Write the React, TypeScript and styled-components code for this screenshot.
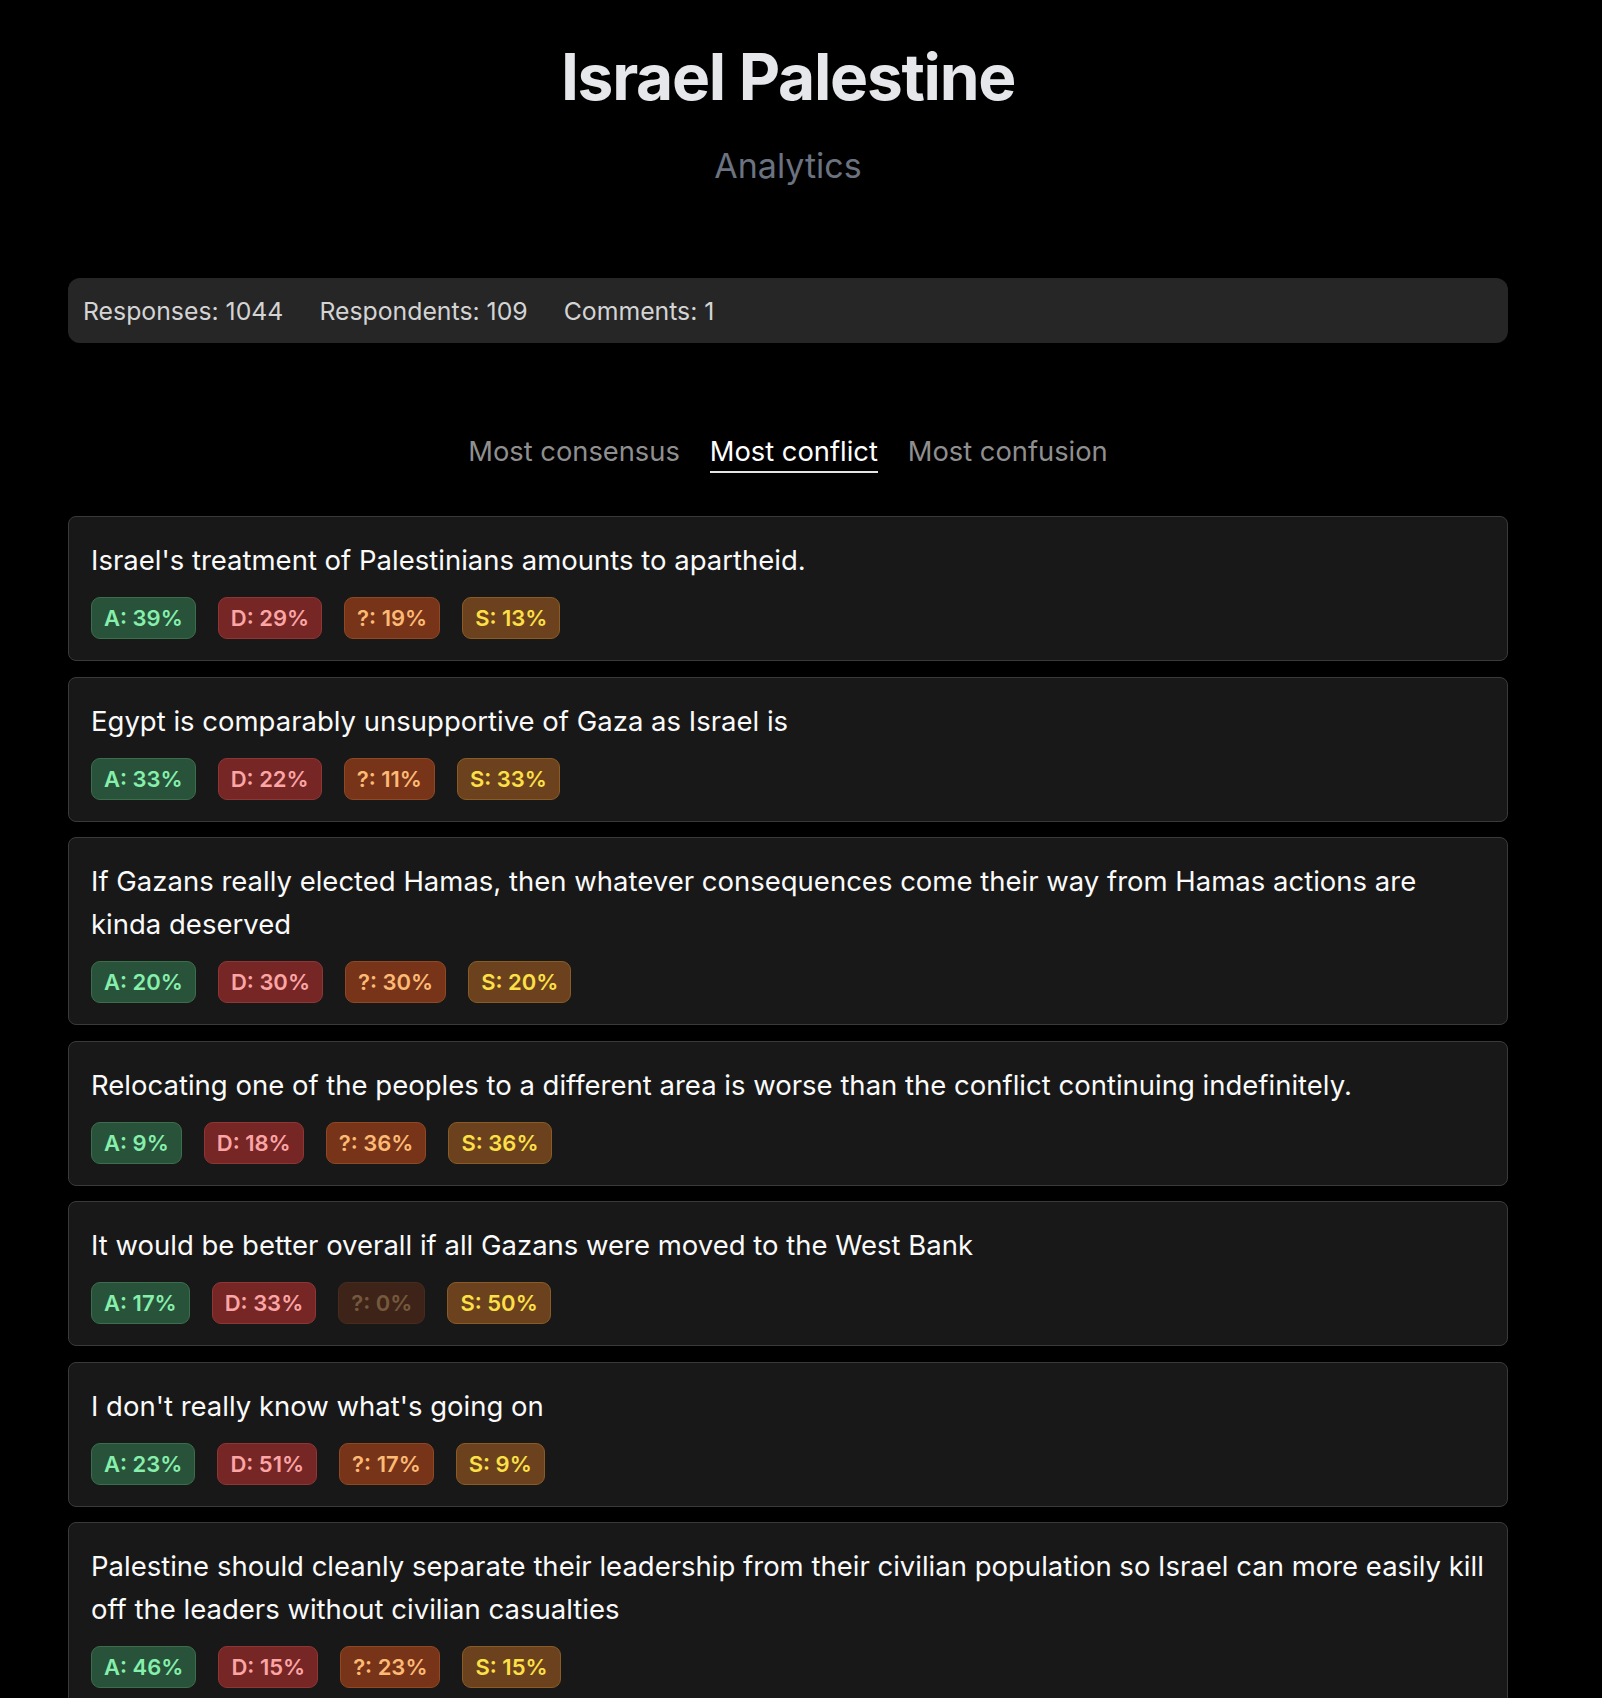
import React from "react";
import styled, { createGlobalStyle } from "styled-components";

type Kind = "agree" | "disagree" | "unsure" | "skip";

interface Statement {
  text: string;
  agree: number;
  disagree: number;
  unsure: number;
  skip: number;
}

const STATEMENTS: Statement[] = [
  { text: "Israel's treatment of Palestinians amounts to apartheid.", agree: 39, disagree: 29, unsure: 19, skip: 13 },
  { text: "Egypt is comparably unsupportive of Gaza as Israel is", agree: 33, disagree: 22, unsure: 11, skip: 33 },
  {
    text: "If Gazans really elected Hamas, then whatever consequences come their way from Hamas actions are kinda deserved",
    agree: 20,
    disagree: 30,
    unsure: 30,
    skip: 20,
  },
  {
    text: "Relocating one of the peoples to a different area is worse than the conflict continuing indefinitely.",
    agree: 9,
    disagree: 18,
    unsure: 36,
    skip: 36,
  },
  { text: "It would be better overall if all Gazans were moved to the West Bank", agree: 17, disagree: 33, unsure: 0, skip: 50 },
  { text: "I don't really know what's going on", agree: 23, disagree: 51, unsure: 17, skip: 9 },
  {
    text: "Palestine should cleanly separate their leadership from their civilian population so Israel can more easily kill off the leaders without civilian casualties",
    agree: 46,
    disagree: 15,
    unsure: 23,
    skip: 15,
  },
];

const BADGE_COLORS: Record<Kind, { bg: string; border: string; fg: string; label: string }> = {
  agree: { bg: "#28523a", border: "#3c6e4b", fg: "#86efac", label: "A" },
  disagree: { bg: "#762625", border: "#8e3634", fg: "#fca5a5", label: "D" },
  unsure: { bg: "#773419", border: "#8f4824", fg: "#fdba74", label: "?" },
  skip: { bg: "#6b421d", border: "#8a5c25", fg: "#fde047", label: "S" },
};

const GlobalStyle = createGlobalStyle`
  html, body {
    margin: 0;
    background: #000;
  }
  body {
    font-family: Inter, "Noto Sans", "Liberation Sans", sans-serif;
    color: #fff;
  }
`;

const Page = styled.div`
  padding: 38px 94px 40px 68px;
`;

const Header = styled.header`
  display: flex;
  flex-direction: column;
  align-items: center;
`;

const Title = styled.h1`
  margin: 0;
  font-size: 64px;
  line-height: 77px;
  font-weight: 700;
  letter-spacing: -0.02em;
  color: #e5e7eb;
`;

const Subtitle = styled.div`
  margin-top: 30px;
  font-size: 34px;
  line-height: 41px;
  color: #6b7280;
`;

const StatsBar = styled.div`
  margin-top: 92px;
  height: 65px;
  display: flex;
  align-items: center;
  gap: 36px;
  padding: 0 15px;
  background: #262626;
  border-radius: 12px;
  font-size: 24.8px;
  color: #d4d4d4;
`;

const Tabs = styled.nav`
  margin-top: 89px;
  display: flex;
  justify-content: center;
  gap: 30px;
`;

const Tab = styled.div<{ $active?: boolean }>`
  font-size: 27.3px;
  line-height: 39px;
  color: ${(p) => (p.$active ? "#ffffff" : "#8f8f8f")};
  border-bottom: 2px solid ${(p) => (p.$active ? "#e5e5e5" : "transparent")};
`;

const List = styled.div`
  margin-top: 43px;
  display: flex;
  flex-direction: column;
  gap: 15.5px;
`;

const Card = styled.div`
  background: #181818;
  border: 1px solid #3a3a3a;
  border-radius: 8px;
  padding: 22px 14px 21px 22px;
`;

const CardText = styled.div`
  font-size: 27.5px;
  line-height: 43px;
  color: #fafafa;
`;

const Badges = styled.div`
  margin-top: 15px;
  display: flex;
  gap: 22px;
`;

const Badge = styled.span<{ $kind: Kind; $faded?: boolean }>`
  display: inline-flex;
  align-items: center;
  height: 42px;
  box-sizing: border-box;
  padding: 0 12px;
  border-radius: 9px;
  font-size: 22px;
  font-weight: 600;
  background: ${(p) => BADGE_COLORS[p.$kind].bg};
  border: 1px solid ${(p) => BADGE_COLORS[p.$kind].border};
  color: ${(p) => BADGE_COLORS[p.$kind].fg};
  opacity: ${(p) => (p.$faded ? 0.4 : 1)};
`;

const KINDS: Kind[] = ["agree", "disagree", "unsure", "skip"];

const App = () => (
  <>
    <GlobalStyle />
    <Page>
      <Header>
        <Title>Israel Palestine</Title>
        <Subtitle>Analytics</Subtitle>
      </Header>
      <StatsBar>
        <span>Responses: 1044</span>
        <span>Respondents: 109</span>
        <span>Comments: 1</span>
      </StatsBar>
      <Tabs>
        <Tab>Most consensus</Tab>
        <Tab $active>Most conflict</Tab>
        <Tab>Most confusion</Tab>
      </Tabs>
      <List>
        {STATEMENTS.map((s) => (
          <Card key={s.text}>
            <CardText>{s.text}</CardText>
            <Badges>
              {KINDS.map((k) => (
                <Badge key={k} $kind={k} $faded={s[k] === 0}>
                  {BADGE_COLORS[k].label}: {s[k]}%
                </Badge>
              ))}
            </Badges>
          </Card>
        ))}
      </List>
    </Page>
  </>
);

export default App;
